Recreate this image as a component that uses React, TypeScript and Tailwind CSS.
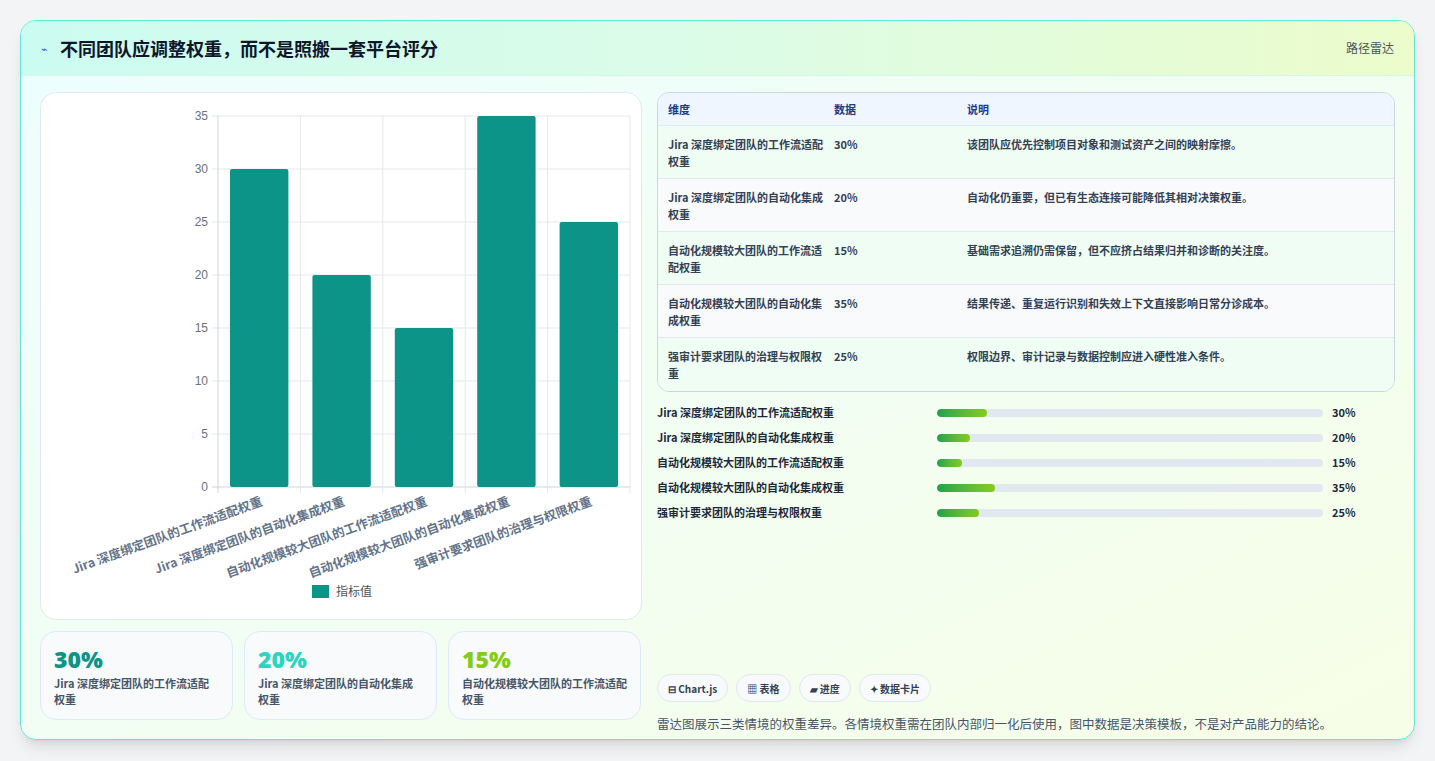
import React from "react";

const items = [
  { name: "Jira 深度绑定团队的工作流适配权重", v: 30, note: "该团队应优先控制项目对象和测试资产之间的映射摩擦。" },
  { name: "Jira 深度绑定团队的自动化集成权重", v: 20, note: "自动化仍重要，但已有生态连接可能降低其相对决策权重。" },
  { name: "自动化规模较大团队的工作流适配权重", v: 15, note: "基础需求追溯仍需保留，但不应挤占结果归并和诊断的关注度。" },
  { name: "自动化规模较大团队的自动化集成权重", v: 35, note: "结果传递、重复运行识别和失效上下文直接影响日常分诊成本。" },
  { name: "强审计要求团队的治理与权限权重", v: 25, note: "权限边界、审计记录与数据控制应进入硬性准入条件。" },
];

const font = { fontFamily: '"Noto Sans CJK SC", "Noto Sans", sans-serif' };

function BarChart() {
  const x0 = 177, top = 23, bottom = 394, right = 589;
  const cw = (right - x0) / 5;
  const y = (v: number) => bottom - (v / 35) * (bottom - top);
  return (
    <svg width="602" height="528" className="block">
      {[0, 5, 10, 15, 20, 25, 30, 35].map((t) => (
        <g key={t}>
          <line x1={x0 - 6} x2={right} y1={y(t)} y2={y(t)} stroke={t === 0 ? "#cbd5e1" : "#e5e7eb"} />
          <text x={x0 - 10} y={y(t) + 4} textAnchor="end" fontSize="12" fill="#6b7280" fontFamily="Liberation Sans, sans-serif">{t}</text>
        </g>
      ))}
      {[0, 1, 2, 3, 4, 5].map((i) => (
        <line key={i} x1={x0 + i * cw} x2={x0 + i * cw} y1={top} y2={bottom + 6} stroke={i === 0 ? "#cbd5e1" : "#e5e7eb"} />
      ))}
      {items.map((it, i) => (
        <g key={i}>
          <rect x={x0 + i * cw + 12} y={y(it.v)} width={cw - 24} height={bottom - y(it.v)} rx="2" fill="#0d9488" />
          <text transform={`translate(${x0 + i * cw + cw / 2 + 4},${bottom + 18}) rotate(-20)`} textAnchor="end" fontSize="12.5" fontWeight="600" fill="#64748b" style={font}>{it.name}</text>
        </g>
      ))}
      <rect x="271" y="492" width="17" height="13" fill="#0d9488" />
      <text x="295" y="503" fontSize="12" fill="#4b5563" style={font}>指标值</text>
    </svg>
  );
}

export default function App() {
  const colors = ["text-[#0d9488]", "text-[#2dd4bf]", "text-[#84cc16]"];
  return (
    <div className="w-[1435px] h-[761px] bg-[#f3f4f6] pt-[20px] pl-[20px]" style={font}>
      <div className="w-[1395px] h-[720px] rounded-2xl border border-[#5eead4] bg-gradient-to-br from-[#ecfeff] to-[#f7fee7] shadow-lg overflow-hidden flex flex-col">
        <div className="h-[55px] flex items-center justify-between px-5 bg-gradient-to-r from-[#ccfbf1] via-[#dcfce7] to-[#ecfccb] border-b border-[#d1fae5]">
          <div className="flex items-center gap-3">
            <span className="text-[11px] text-[#2563eb]">⌁</span>
            <h1 className="text-[18px] font-bold text-[#0f172a]">不同团队应调整权重，而不是照搬一套平台评分</h1>
          </div>
          <span className="text-[12px] text-[#475569]">路径雷达</span>
        </div>
        <div className="flex gap-[15px] px-[19px] pt-[16px]">
          <div className="w-[602px] flex flex-col gap-[11px]">
            <div className="h-[528px] bg-white rounded-2xl border border-[#e2e8f0]">
              <BarChart />
            </div>
            <div className="flex gap-[11px]">
              {items.slice(0, 3).map((it, i) => (
                <div key={i} className="w-[193px] h-[89px] rounded-2xl border border-[#dbeafe] bg-[#f8fafc] px-[13px] pt-[12px]">
                  <div className={`text-[23px] font-extrabold leading-[30px] ${colors[i]}`} style={{ fontFamily: "Open Sans, sans-serif" }}>{it.v}%</div>
                  <div className="text-[11px] font-semibold text-[#475569] leading-[16px] mt-[1px]">{it.name}</div>
                </div>
              ))}
            </div>
          </div>
          <div className="flex-1 flex flex-col">
            <div className="rounded-xl border border-[#cbd5e1] overflow-hidden text-[11px]">
              <div className="flex h-[33px] items-center bg-[#eff6ff] text-[#1e3a8a] font-semibold border-b border-[#dbeafe]">
                <div className="w-[176px] pl-[10px]">维度</div>
                <div className="w-[133px]">数据</div>
                <div className="flex-1">说明</div>
              </div>
              {items.map((it, i) => (
                <div key={i} className={`flex h-[53px] pt-[10px] text-[#334155] font-semibold border-b last:border-b-0 border-[#e2e8f0] ${i % 2 ? "bg-[#f8fafc]" : "bg-[#f0fdf4]"}`}>
                  <div className="w-[176px] pl-[10px] pr-[10px] leading-[17px]">{it.name}</div>
                  <div className="w-[133px] leading-[17px]">{it.v}%</div>
                  <div className="flex-1 leading-[17px]">{it.note}</div>
                </div>
              ))}
            </div>
            <div className="mt-[12px] flex flex-col gap-[8px]">
              {items.map((it, i) => (
                <div key={i} className="flex items-center h-[17px] text-[11px] font-semibold text-[#1e293b]">
                  <div className="w-[280px]">{it.name}</div>
                  <div className="w-[386px] h-[8px] rounded-full bg-[#e2e8f0] overflow-hidden">
                    <div className="h-full rounded-full bg-gradient-to-r from-[#16a34a] to-[#84cc16]" style={{ width: it.v * 1.66 }} />
                  </div>
                  <div className="ml-[9px]">{it.v}%</div>
                </div>
              ))}
            </div>
            <div className="mt-[153px] flex gap-[8px] text-[10px] font-semibold text-[#334155]">
              {["⊟ Chart.js", "▦ 表格", "▰ 进度", "✦ 数据卡片"].map((c) => (
                <span key={c} className="h-[28px] px-[10px] flex items-center rounded-full border border-[#e2e8f0] bg-[#f8fafc]">{c}</span>
              ))}
            </div>
            <p className="mt-[13px] text-[12.5px] text-[#475569]">雷达图展示三类情境的权重差异。各情境权重需在团队内部归一化后使用，图中数据是决策模板，不是对产品能力的结论。</p>
          </div>
        </div>
      </div>
    </div>
  );
}
